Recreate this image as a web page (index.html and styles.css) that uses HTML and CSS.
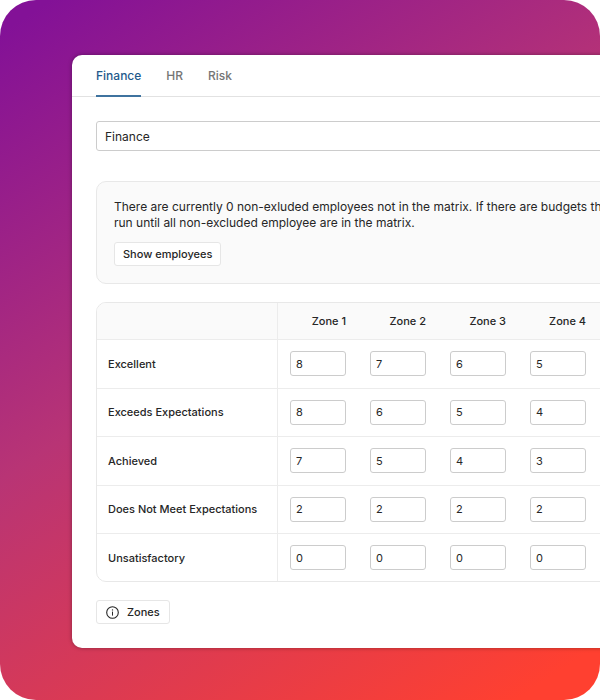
FILE: index.html
```html
<!DOCTYPE html>
<html lang="en">
<head>
  <meta charset="UTF-8">
  <meta name="viewport" content="width=device-width, initial-scale=1.0">
  <title>Matrix</title>
  <link rel="stylesheet" href="styles.css">
</head>
<body>
  <main class="backdrop">
    <section class="panel">
      <nav class="tabs">
        <a class="tab active" href="#finance">Finance</a>
        <a class="tab" href="#hr">HR</a>
        <a class="tab" href="#risk">Risk</a>
      </nav>

      <div class="content">
        <input class="name-input" type="text" value="Finance" aria-label="Matrix name">

        <div class="notice">
          <p>There are currently 0 non-exluded employees not in the matrix. If there are budgets th<br>run until all non-excluded employee are in the matrix.</p>
          <button class="btn" type="button">Show employees</button>
        </div>

        <div class="matrix-wrap">
          <table class="matrix">
            <thead>
              <tr>
                <th class="label-col" aria-label="Rating"></th>
                <th class="zone-col" id="z1">Zone 1</th>
                <th class="zone-col" id="z2">Zone 2</th>
                <th class="zone-col" id="z3">Zone 3</th>
                <th class="zone-col" id="z4">Zone 4</th>
                <td></td>
              </tr>
            </thead>
            <tbody>
              <tr>
                <th id="r1">Excellent</th>
                <td><input type="text" value="8" aria-labelledby="r1 z1"></td>
                <td><input type="text" value="7" aria-labelledby="r1 z2"></td>
                <td><input type="text" value="6" aria-labelledby="r1 z3"></td>
                <td><input type="text" value="5" aria-labelledby="r1 z4"></td>
                <td></td>
              </tr>
              <tr>
                <th id="r2">Exceeds Expectations</th>
                <td><input type="text" value="8" aria-labelledby="r2 z1"></td>
                <td><input type="text" value="6" aria-labelledby="r2 z2"></td>
                <td><input type="text" value="5" aria-labelledby="r2 z3"></td>
                <td><input type="text" value="4" aria-labelledby="r2 z4"></td>
                <td></td>
              </tr>
              <tr>
                <th id="r3">Achieved</th>
                <td><input type="text" value="7" aria-labelledby="r3 z1"></td>
                <td><input type="text" value="5" aria-labelledby="r3 z2"></td>
                <td><input type="text" value="4" aria-labelledby="r3 z3"></td>
                <td><input type="text" value="3" aria-labelledby="r3 z4"></td>
                <td></td>
              </tr>
              <tr>
                <th id="r4">Does Not Meet Expectations</th>
                <td><input type="text" value="2" aria-labelledby="r4 z1"></td>
                <td><input type="text" value="2" aria-labelledby="r4 z2"></td>
                <td><input type="text" value="2" aria-labelledby="r4 z3"></td>
                <td><input type="text" value="2" aria-labelledby="r4 z4"></td>
                <td></td>
              </tr>
              <tr>
                <th id="r5">Unsatisfactory</th>
                <td><input type="text" value="0" aria-labelledby="r5 z1"></td>
                <td><input type="text" value="0" aria-labelledby="r5 z2"></td>
                <td><input type="text" value="0" aria-labelledby="r5 z3"></td>
                <td><input type="text" value="0" aria-labelledby="r5 z4"></td>
                <td></td>
              </tr>
            </tbody>
          </table>
        </div>

        <button class="btn btn-icon" type="button">
          <svg width="13" height="13" viewBox="0 0 13 13" fill="none" stroke="currentColor" aria-hidden="true">
            <circle cx="6.5" cy="6.5" r="5.8" stroke-width="1.1"/>
            <path d="M6.5 5.6v4" stroke-width="1"/>
            <circle cx="6.5" cy="3.9" r=".7" fill="currentColor" stroke="none"/>
          </svg>
          Zones
        </button>
      </div>
    </section>
  </main>
</body>
</html>
```
FILE: styles.css
```css
* {
  box-sizing: border-box;
}
body {
  margin: 0;
  background: #fff;
  color: #262626;
  font-family: Inter, "Liberation Sans", sans-serif;
  font-size: 11px;
}
.backdrop {
  min-height: 100vh;
  padding: 55px 0 52px 72px;
  border-radius: 36px;
  overflow: hidden;
  background: linear-gradient(147deg, #831197 3%, #b83475 44%, #ff4030 95%);
}
/* runs past the right edge and gets clipped */
.panel {
  margin-right: -120px;
  background: #fff;
  border-radius: 10px;
  box-shadow: 0 0 4px rgba(0, 0, 0, 0.35);
}
.tabs {
  display: flex;
  gap: 25px;
  height: 42px;
  padding: 0 24px;
  border-bottom: 1px solid #e2e2e2;
}
.tab {
  height: 42px;
  line-height: 42px;
  font-size: 12px;
  font-weight: 500;
  color: #757575;
  text-decoration: none;
}
.tab.active {
  color: #1f5a8c;
  border-bottom: 2px solid #3f739f;
}
.content {
  padding: 24px;
}
input {
  font-family: inherit;
  color: inherit;
  background: #fff;
  border: 1px solid #ccc;
  border-radius: 3px;
  outline: none;
}
.name-input {
  display: block;
  width: 100%;
  height: 30px;
  padding: 0 8px;
  font-size: 12px;
}
.notice {
  margin: 30px 0 18px;
  padding: 17px;
  background: #fafafa;
  border: 1px solid #e8e8e8;
  border-radius: 10px;
}
.notice p {
  margin: 0 0 11px;
  font-size: 12px;
  line-height: 16px;
  white-space: nowrap;
}
.btn {
  display: flex;
  align-items: center;
  gap: 8px;
  height: 24px;
  padding: 0 8px;
  font-family: inherit;
  font-size: 11px;
  font-weight: 500;
  color: inherit;
  background: #fff;
  border: 1px solid #e6e6e6;
  border-radius: 3px;
}
.btn-icon {
  padding: 0 9px;
}
.matrix-wrap {
  margin-bottom: 18px;
  border: 1px solid #e8e8e8;
  border-radius: 10px;
  overflow: hidden;
}
.matrix {
  width: 100%;
  height: 278px;
  table-layout: fixed;
  border-collapse: separate;
  border-spacing: 0;
}
.matrix th,
.matrix td {
  padding: 0 12px;
  border-bottom: 1px solid #ececec;
  vertical-align: middle;
}
.matrix th {
  font-weight: 500;
  text-align: left;
}
.matrix thead th,
.matrix thead td {
  height: 37px;
  background: #fafafa;
}
.matrix thead .zone-col {
  width: 80px;
  text-align: right;
}
.matrix .label-col {
  width: 181px;
}
.matrix th:first-child {
  padding-left: 11px;
  border-right: 1px solid #ececec;
}
.matrix tbody tr:last-child > * {
  border-bottom: 0;
}
.matrix input {
  display: block;
  width: 100%;
  height: 25px;
  padding: 0 5px;
  font-size: 11px;
}
```
